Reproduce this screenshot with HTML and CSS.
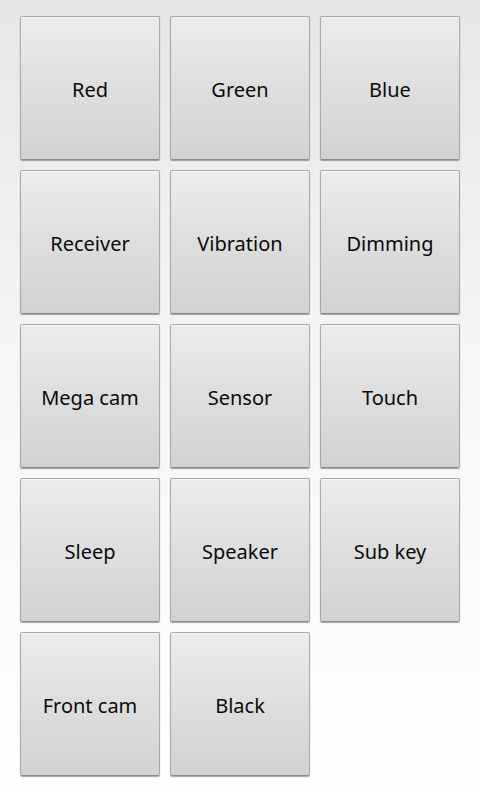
FILE: index.html
```html
<!DOCTYPE html>
<html lang="en">
<head>
    <meta charset="UTF-8">
    <meta name="viewport" content="width=device-width, initial-scale=1.0">
    <title>Test Menu</title>
    <link rel="stylesheet" href="styles.css">
</head>
<body>
    <div class="grid">
        <button class="key">Red</button>
        <button class="key">Green</button>
        <button class="key">Blue</button>
        <button class="key">Receiver</button>
        <button class="key">Vibration</button>
        <button class="key">Dimming</button>
        <button class="key">Mega cam</button>
        <button class="key">Sensor</button>
        <button class="key">Touch</button>
        <button class="key">Sleep</button>
        <button class="key">Speaker</button>
        <button class="key">Sub key</button>
        <button class="key">Front cam</button>
        <button class="key">Black</button>
    </div>
</body>
</html>
```

FILE: styles.css
```css
html {
    height: 100%;
}
body {
    margin: 0;
    min-height: 100%;
    background: linear-gradient(to bottom, #e6e6e6 0%, #f6f6f6 45%, #ffffff 100%);
    font-family: "Noto Sans", sans-serif;
}
.grid {
    display: grid;
    grid-template-columns: repeat(3, 140px);
    grid-auto-rows: 144px;
    gap: 10px;
    padding: 16px 20px;
}
.key {
    margin: 0;
    padding: 2px 0 0;
    border: 1px solid #a9a9a9;
    border-bottom-color: #8a8a8a;
    border-radius: 2px;
    background: linear-gradient(to bottom, #ececec 0%, #dedede 50%, #d2d2d2 100%);
    box-shadow: 0 1px 1px rgba(0, 0, 0, 0.35), inset 0 1px 0 rgba(255, 255, 255, 0.5);
    font-family: "Noto Sans", sans-serif;
    font-size: 20px;
    color: #0a0a0a;
}
```
